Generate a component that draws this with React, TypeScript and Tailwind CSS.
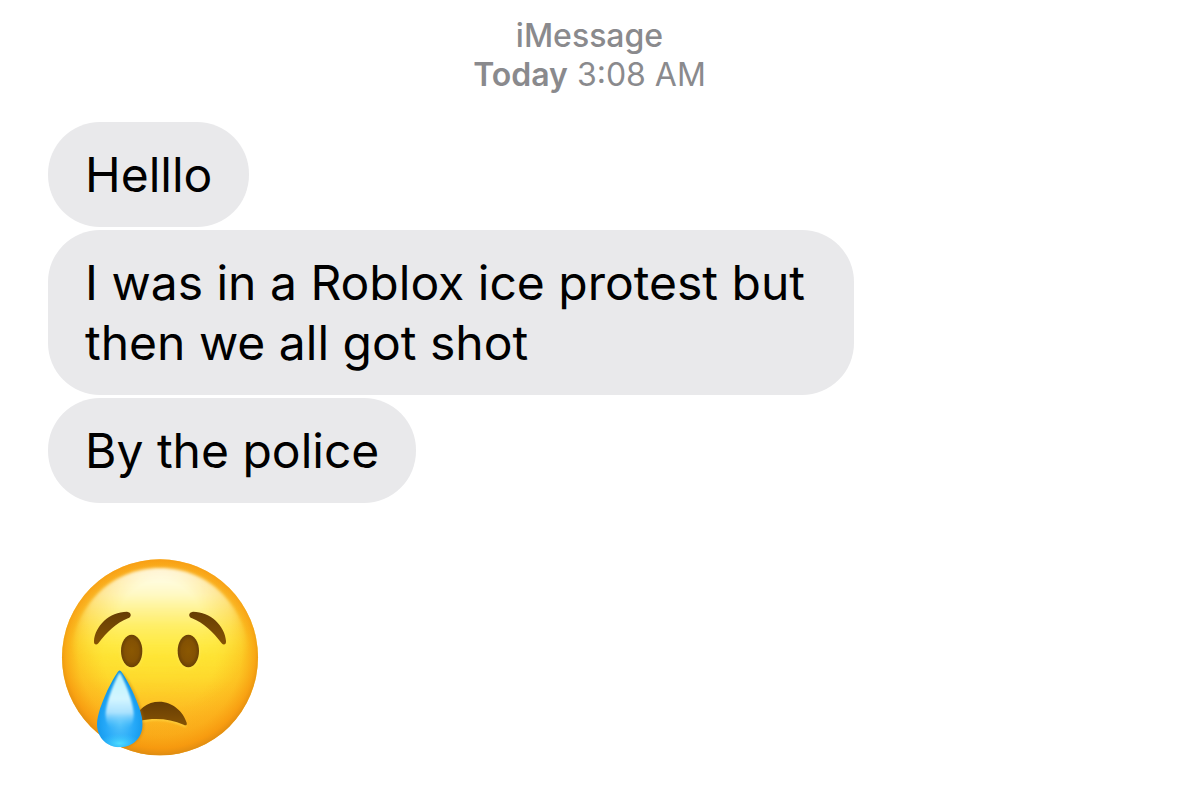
import type { ReactNode } from "react";

interface BubbleProps {
  children: ReactNode;
}

const messages = [
  "Helllo",
  "I was in a Roblox ice protest but then we all got shot",
  "By the police",
];

function Bubble({ children }: BubbleProps) {
  return (
    <li className="max-w-[806px] rounded-[52px] bg-[#e9e9eb] px-[37px] pt-[23px] pb-[22px] text-[48px] leading-[60px] text-black">
      {children}
    </li>
  );
}

function CryingFace() {
  return (
    <svg
      role="img"
      aria-label="Crying face"
      className="size-[200px]"
      viewBox="60 54 600 600"
    >
      <defs>
        <linearGradient id="face" x1="0" y1="0" x2="0" y2="1">
          <stop offset="0" stopColor="#fcb826" />
          <stop offset="0.2" stopColor="#fdd23a" />
          <stop offset="0.42" stopColor="#fee12f" />
          <stop offset="0.6" stopColor="#fed52b" />
          <stop offset="0.8" stopColor="#fdb922" />
          <stop offset="1" stopColor="#f7a818" />
        </linearGradient>
        <radialGradient id="rim" cx="0.5" cy="0.48" r="0.52">
          <stop offset="0.55" stopColor="#f9a010" stopOpacity="0" />
          <stop offset="0.8" stopColor="#f99c0e" stopOpacity="0.3" />
          <stop offset="0.93" stopColor="#f6920a" stopOpacity="0.7" />
          <stop offset="1" stopColor="#de8c12" />
        </radialGradient>
        <linearGradient id="shine" x1="0" y1="0" x2="0" y2="1">
          <stop offset="0" stopColor="#fffff6" />
          <stop offset="0.18" stopColor="#fffbcc" stopOpacity="0.95" />
          <stop offset="0.4" stopColor="#fff374" stopOpacity="0.8" />
          <stop offset="0.62" stopColor="#ffee3c" stopOpacity="0.5" />
          <stop offset="1" stopColor="#fee52b" stopOpacity="0" />
        </linearGradient>
        {/* Fades the shine out towards the cheeks */}
        <radialGradient
          id="shineFade"
          gradientUnits="userSpaceOnUse"
          cx="360"
          cy="250"
          r="280"
        >
          <stop offset="0.45" stopColor="#fff" />
          <stop offset="0.75" stopColor="#fff" stopOpacity="0.65" />
          <stop offset="1" stopColor="#fff" stopOpacity="0" />
        </radialGradient>
        <mask id="shineMask" maskUnits="userSpaceOnUse" x="60" y="54" width="600" height="600">
          <rect x="60" y="54" width="600" height="600" fill="url(#shineFade)" />
        </mask>
        <radialGradient id="eye">
          <stop offset="0" stopColor="#8b5802" />
          <stop offset="0.65" stopColor="#835103" />
          <stop offset="1" stopColor="#694005" />
        </radialGradient>
        <linearGradient id="brow" x1="0" y1="0" x2="0" y2="1">
          <stop offset="0" stopColor="#663d04" />
          <stop offset="1" stopColor="#855204" />
        </linearGradient>
        <radialGradient id="tear" cx="0.5" cy="0.68" r="0.6">
          <stop offset="0" stopColor="#52c2fb" />
          <stop offset="0.5" stopColor="#25a8f8" />
          <stop offset="1" stopColor="#078fe2" />
        </radialGradient>
        <linearGradient id="tearShine" x1="0" y1="0" x2="0" y2="1">
          <stop offset="0" stopColor="#bdf4fb" />
          <stop offset="0.45" stopColor="#d3f5ff" />
          <stop offset="0.68" stopColor="#c0ebff" stopOpacity="0.85" />
          <stop offset="0.95" stopColor="#55c6fc" stopOpacity="0" />
        </linearGradient>
        <radialGradient id="tearGlow">
          <stop offset="0" stopColor="#4fdcff" />
          <stop offset="1" stopColor="#35c4fc" stopOpacity="0" />
        </radialGradient>
        <filter id="soft" x="-10%" y="-10%" width="120%" height="120%">
          <feGaussianBlur stdDeviation="4" />
        </filter>
        <filter id="softer" x="-30%" y="-30%" width="160%" height="160%">
          <feGaussianBlur stdDeviation="3" />
        </filter>
        <clipPath id="tearClip">
          <path d="M239 391C247 391 308 500 308 553C308 593 278 622 239 622C201 622 171 593 171 553C171 500 231 391 239 391Z" />
        </clipPath>
      </defs>

      <circle cx="360" cy="352" r="294" fill="url(#face)" />
      <circle cx="360" cy="352" r="294" fill="url(#rim)" />
      <g mask="url(#shineMask)">
        <path
          d="M360 84C510 84 612 200 628 330C620 450 500 520 360 520C220 520 100 450 92 330C108 200 210 84 360 84Z"
          fill="url(#shine)"
          filter="url(#soft)"
        />
      </g>

      {/* Light edges under the features */}
      <g fill="none" stroke="#ffe956" strokeWidth="6" opacity="0.65" filter="url(#softer)">
        <ellipse cx="275" cy="336" rx="32" ry="49" />
        <ellipse cx="445" cy="336" rx="32" ry="49" />
        <path d="M302 544C350 532 400 540 438 559" />
      </g>

      <g fill="url(#brow)">
        <path d="M162 303C165 258 208 215 261 215C275 217 276 230 264 235C228 250 202 274 175 310C169 317 161 314 162 303Z" />
        <path d="M558 303C555 258 512 215 459 215C445 217 444 230 456 235C492 250 518 274 545 310C551 317 559 314 558 303Z" />
        <path d="M282 545C292 507 322 485 358 485C398 485 430 515 440 548C442 556 437 558 431 554C392 536 344 532 300 542Z" />
      </g>
      <ellipse cx="275" cy="333" rx="32" ry="49" fill="url(#eye)" />
      <ellipse cx="445" cy="333" rx="32" ry="49" fill="url(#eye)" />

      {/* Tear */}
      <path
        d="M244 396C258 400 312 492 312 554C312 594 284 619 248 621Z"
        fill="#b77108"
        opacity="0.35"
        filter="url(#softer)"
      />
      <g clipPath="url(#tearClip)">
        <rect x="165" y="385" width="150" height="240" fill="url(#tear)" />
        <ellipse cx="239" cy="610" rx="62" ry="30" fill="url(#tearGlow)" />
        <path
          d="M239 397C247 407 281 485 281 524C281 558 262 575 239 575C216 575 197 558 197 524C197 485 231 407 239 397Z"
          fill="url(#tearShine)"
          filter="url(#softer)"
        />
      </g>
    </svg>
  );
}

export default function App() {
  return (
    <main className="min-h-screen bg-white px-12 pt-4 pb-12 font-['Inter',sans-serif]">
      <header className="text-center text-[32px] leading-[39px] text-[#8a8a8d]">
        <h1 className="font-medium">iMessage</h1>
        <p>
          <span className="font-semibold">Today</span> 3:08 AM
        </p>
      </header>

      <ul className="mt-7 flex flex-col items-start gap-[3px]">
        {messages.map((text) => (
          <Bubble key={text}>{text}</Bubble>
        ))}
        <li className="mt-[52px] ml-3">
          <CryingFace />
        </li>
      </ul>
    </main>
  );
}
